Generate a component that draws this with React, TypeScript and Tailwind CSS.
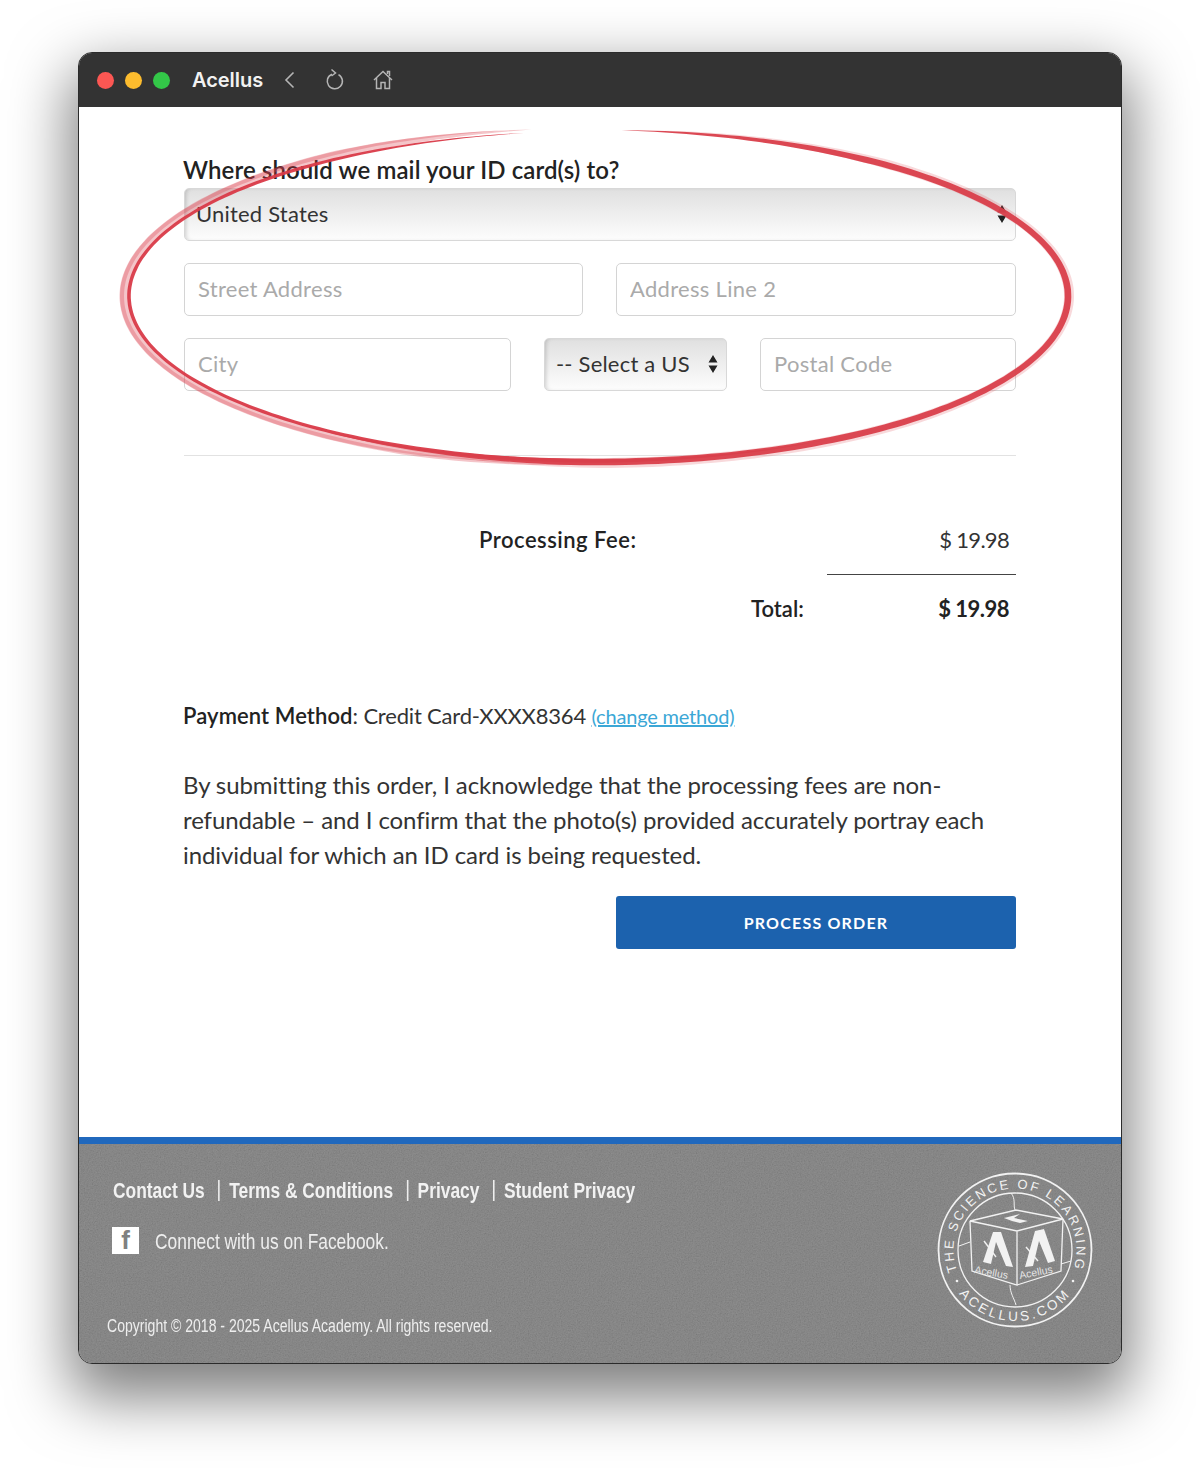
import React from 'react';

// hand-drawn looking red circle, built as tapered bands around an ellipse
function bandPath(rx: number, ry: number, offset: number, maxW: number, from: number, to: number) {
  const cx = 597;
  const cy = 296;
  const n = 160;
  const outer: string[] = [];
  const inner: string[] = [];
  for (let i = 0; i <= n; i++) {
    const t = i / n;
    const a = ((from + (to - from) * t) * Math.PI) / 180;
    const taper = Math.min(1, Math.sin(Math.PI * t) * 2.2);
    const w = maxW * Math.pow(Math.max(taper, 0), 0.9);
    const o = offset * Math.min(1, Math.sin(Math.PI * t) * 3);
    const r1 = o + w / 2;
    const r2 = o - w / 2;
    outer.push(`${(cx + (rx + r1) * Math.cos(a)).toFixed(1)},${(cy + (ry + r1) * Math.sin(a)).toFixed(1)}`);
    inner.unshift(`${(cx + (rx + r2) * Math.cos(a)).toFixed(1)},${(cy + (ry + r2) * Math.sin(a)).toFixed(1)}`);
  }
  return `M${outer.join('L')}L${inner.join('L')}Z`;
}

function RedCircle() {
  return (
    <svg className="absolute left-0 top-0 pointer-events-none" width="1200" height="1468" viewBox="0 0 1200 1468">
      {/* pale strands, mostly on the left half */}
      <path d={bandPath(472, 168, 1, 9, 88, 262)} fill="#d9404c" fillOpacity="0.3" />
      <path d={bandPath(473, 169, 2, 4, 100, 258)} fill="#d9404c" fillOpacity="0.3" />
      <path d={bandPath(472, 167, 0, 10, -82, 120)} fill="#e0505c" fillOpacity="0.22" />
      {/* main stroke */}
      <path d={bandPath(468, 165, 0, 3.6, 60, 261)} fill="#d93a48" fillOpacity="0.95" />
      <path d={bandPath(471, 166, 0, 6.6, -87, 125)} fill="#d93f4b" fillOpacity="0.95" />
    </svg>
  );
}

function UpDownArrows({ className }: { className: string }) {
  return (
    <svg className={className} width="10" height="20" viewBox="0 0 10 20">
      <path d="M5 1 L9.5 8.5 H0.5 Z M5 19 L9.5 11.5 H0.5 Z" fill="#222" />
    </svg>
  );
}

function SelectBox({ label, width }: { label: string; width: string }) {
  return (
    <div
      className={`relative flex h-[53px] ${width} items-center overflow-hidden whitespace-nowrap rounded-[5px] border border-[#d8d8d8] bg-gradient-to-b from-[#e0e0e0] to-[#fdfdfd] pb-[2px] pl-[11px] text-[22px] tracking-[0.2px] text-[#333] shadow-[inset_3px_0_4px_-2px_rgba(0,0,0,0.18)]`}
    >
      {label}
      <UpDownArrows className="absolute right-[8px] top-[15px]" />
    </div>
  );
}

function TextField({ placeholder, width }: { placeholder: string; width: string }) {
  return (
    <input
      placeholder={placeholder}
      readOnly
      className={`h-[53px] ${width} rounded-[5px] border border-[#d4d4d4] bg-white px-[13px] pb-[2px] text-[22px] tracking-[0.3px] outline-none placeholder:text-[#aaaaaa]`}
    />
  );
}

function AcellusSeal() {
  return (
    <svg width="158" height="158" viewBox="0 0 158 158" fill="none" stroke="#f2f2f2" className="mr-[27px]">
      <defs>
        <path id="seal-top" d="M21.2 100 A 61.5 61.5 0 1 1 136.8 100" />
        <path id="seal-bottom" d="M23 122.7 A 71 71 0 0 0 135 122.7" />
      </defs>
      <circle cx="79" cy="79" r="76.5" strokeWidth="1.8" />
      <circle cx="79" cy="79" r="57" strokeWidth="1.3" />
      <text fill="#f2f2f2" stroke="none" fontFamily="Liberation Sans, sans-serif" fontSize="13">
        <textPath href="#seal-top" textLength="232">THE SCIENCE OF LEARNING</textPath>
      </text>
      <text fill="#f2f2f2" stroke="none" fontFamily="Liberation Sans, sans-serif" fontSize="13.5">
        <textPath href="#seal-bottom" textLength="126">ACELLUS.COM</textPath>
      </text>
      <circle cx="21" cy="110" r="1.3" fill="#f2f2f2" stroke="none" />
      <circle cx="137" cy="110" r="1.3" fill="#f2f2f2" stroke="none" />
      {/* cube */}
      <path d="M34 50 L80 39 L127 48 L81 60 Z M34 50 L36 100 L81 114 L81 60 M127 48 L125 100 L81 114" strokeWidth="1.3" />
      <path d="M75 22 C80 28 77 34 79 39 M34 71 L23 75 M125 93 L135 90 M74 114 C74 122 78 127 80 134" strokeWidth="1" />
      <path d="M68 47 L84 43 L78 47 L92 50 L84 52 L76 50 Z" fill="#f2f2f2" stroke="none" />
      {/* A marks */}
      <path d="M47 91 L57 61 L65 61 L77 96 L70 95 L60 71 L55 93 Z" fill="#f2f2f2" stroke="none" />
      <path d="M48 70 L60 86" strokeWidth="1.4" />
      <path d="M89 96 L99 60 L108 58 L119 90 L112 92 L103 70 L97 95 Z" fill="#f2f2f2" stroke="none" />
      <path d="M90 76 L102 90" strokeWidth="1.4" />
      <text x="38" y="102" fill="#e4e4e4" stroke="none" fontFamily="Liberation Sans, sans-serif" fontSize="10.5" transform="rotate(10 38 102)">Acellus</text>
      <text x="84" y="108" fill="#e4e4e4" stroke="none" fontFamily="Liberation Sans, sans-serif" fontSize="10.5" transform="rotate(-11 84 108)">Acellus</text>
    </svg>
  );
}

export default function App() {
  return (
    <div className="relative h-[1468px] w-[1200px] bg-white pl-[78px] pt-[52px] font-['Lato',sans-serif]">
      <div className="flex h-[1312px] w-[1044px] flex-col overflow-hidden rounded-[14px] border border-[#2b2b2b] bg-white shadow-[0_26px_60px_8px_rgba(0,0,0,0.5)]">
        {/* title bar */}
        <div className="flex h-[54px] shrink-0 items-center bg-[#333333] pl-[18px]">
          <span className="h-[17px] w-[17px] rounded-full bg-[#fc5753]" />
          <span className="ml-[11px] h-[17px] w-[17px] rounded-full bg-[#fdbc2e]" />
          <span className="ml-[11px] h-[17px] w-[17px] rounded-full bg-[#33c748]" />
          <span className="ml-[22px] font-['Inter',sans-serif] text-[20px] font-semibold tracking-[-0.05px] text-[#f2f2f2]">Acellus</span>
          <svg className="ml-[20px]" width="14" height="20" viewBox="0 0 14 20" fill="none" stroke="#b5b5b5" strokeWidth="1.6">
            <path d="M10.5 2.5 L3 10 L10.5 17.5" />
          </svg>
          <svg className="ml-[27px]" width="22" height="24" viewBox="0 0 22 24" fill="none" stroke="#b5b5b5" strokeWidth="1.5">
            <path d="M8 6.2 A7.6 7.6 0 1 0 14.5 6.6" />
            <path d="M7.5 1.5 L11.5 5 L7.5 8" />
          </svg>
          <svg className="ml-[26px]" width="22" height="22" viewBox="0 0 22 22" fill="none" stroke="#b5b5b5" strokeWidth="1.5">
            <path d="M2 11 L11 2.5 L20 11" />
            <path d="M4.5 9 V19.5 H9 V13.5 H13 V19.5 H17.5 V9" />
            <path d="M15.5 5 V2.5 H17.5 V7" />
          </svg>
        </div>

        {/* order form */}
        <div className="flex grow flex-col pl-[104px] pr-[105px] text-[#333]">
          <div className="mt-[48px] text-[24px] font-semibold leading-[30px] tracking-[0.1px] text-[#222]">Where should we mail your ID card(s) to?</div>
          <div className="ml-px mt-[3px]">
            <SelectBox label="United States" width="w-[832px]" />
          </div>
          <div className="ml-px mt-[22px] flex justify-between">
            <TextField placeholder="Street Address" width="w-[399px]" />
            <TextField placeholder="Address Line 2" width="w-[400px]" />
          </div>
          <div className="ml-px mt-[22px] flex justify-between">
            <TextField placeholder="City" width="w-[327px]" />
            <SelectBox label="-- Select a US" width="w-[183px]" />
            <TextField placeholder="Postal Code" width="w-[256px]" />
          </div>
          <div className="ml-px mt-[64px] h-px bg-[#e2e2e2]" />

          <div className="mt-[68px] flex h-[30px] items-center text-[22px]">
            <span className="ml-[296px] font-semibold tracking-[0.5px] text-[#222]">Processing Fee:</span>
            <span className="ml-auto pr-[7px] tracking-[-0.7px]">$ 19.98</span>
          </div>
          <div className="ml-auto mt-[20px] h-px w-[189px] bg-[#444]" />
          <div className="mt-[18px] flex h-[30px] items-center text-[22px] font-semibold text-[#222]">
            <span className="ml-[568px]">Total:</span>
            <span className="ml-auto pr-[7px] font-bold tracking-[-0.5px]">$ 19.98</span>
          </div>

          <div className="mt-[78px] h-[30px] whitespace-nowrap text-[22px] leading-[30px] tracking-[-0.18px]">
            <span className="font-semibold tracking-[0.1px] text-[#222]">Payment Method</span>: Credit Card-XXXX8364{' '}
            <span className="text-[20px] text-[#3ba7d6] underline">(change method)</span>
          </div>
          <p className="mt-[36px] whitespace-nowrap text-[24px] leading-[35px] tracking-[-0.09px]">
            By submitting this order, I acknowledge that the processing fees are non-
            <br />
            refundable – and I confirm that the photo(s) provided accurately portray each
            <br />
            individual for which an ID card is being requested.
          </p>
          <div className="mt-[24px] flex justify-end">
            <button type="button" className="h-[53px] w-[400px] rounded-[3px] bg-[#1c62ae] text-[16px] font-bold tracking-[1.2px] text-white">
              PROCESS ORDER
            </button>
          </div>
        </div>

        {/* footer */}
        <div className="h-[7px] shrink-0 bg-[#2068bd]" />
        <div className="relative flex h-[219px] shrink-0 justify-between overflow-hidden bg-[#797979] font-['Liberation_Sans',sans-serif]">
          <svg className="absolute inset-0" width="1044" height="219">
            <filter id="grain" x="0" y="0" width="100%" height="100%">
              <feTurbulence type="fractalNoise" baseFrequency="0.75" numOctaves="2" />
              <feColorMatrix type="matrix" values="0.5 0.5 0 0 0 0.5 0.5 0 0 0 0.5 0.5 0 0 0 0 0 0 0 1" />
            </filter>
            <rect width="1044" height="219" filter="url(#grain)" opacity="0.2" />
          </svg>
          <div className="relative">
            <div className="ml-[34px] mt-[35px] flex h-[23px] origin-left scale-x-[0.79] items-center whitespace-nowrap text-[22px] font-bold text-[#f2f2f2]">
              <span>Contact Us</span>
              <span className="ml-[17px] mr-[12px] h-[21px] w-[2px] bg-[#eee]" />
              <span>Terms &amp; Conditions</span>
              <span className="ml-[17px] mr-[12px] h-[21px] w-[2px] bg-[#eee]" />
              <span>Privacy</span>
              <span className="ml-[17px] mr-[12px] h-[21px] w-[2px] bg-[#eee]" />
              <span>Student Privacy</span>
            </div>
            <div className="ml-[33px] mt-[21px] flex items-center">
              <span className="flex h-[27px] w-[27px] items-end justify-center bg-white font-bold leading-none text-[#808080]">
                <span className="text-[26px] leading-[27px]">f</span>
              </span>
              <span className="ml-[16px] mt-[2px] origin-left scale-x-[0.79] whitespace-nowrap text-[22px] text-[#eeeeee]">Connect with us on Facebook.</span>
            </div>
            <div className="ml-[28px] mt-[55px] origin-left scale-x-[0.78] whitespace-nowrap text-[18px] text-[#eeeeee]">
              Copyright © 2018 - 2025 Acellus Academy. All rights reserved.
            </div>
          </div>
          <div className="relative mt-[27px]">
            <AcellusSeal />
          </div>
        </div>
      </div>
      <RedCircle />
    </div>
  );
}
